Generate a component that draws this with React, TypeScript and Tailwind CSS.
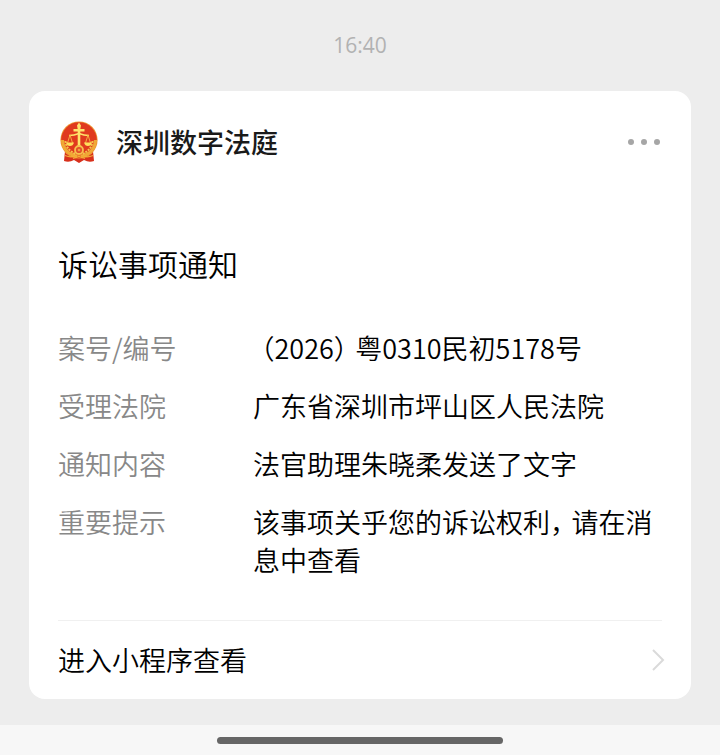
const details = [
  { label: "案号/编号", value: "（2026）粤0310民初5178号" },
  { label: "受理法院", value: "广东省深圳市坪山区人民法院" },
  { label: "通知内容", value: "法官助理朱晓柔发送了文字" },
  { label: "重要提示", value: "该事项关乎您的诉讼权利，请在消息中查看" },
];

// Full-width punctuation uses its half-width form plus a little padding.
function CompactText({ text }: { text: string }) {
  return text.split(/([（），])/).map((part, i) => {
    if (part === "（") return <span key={i} className="pl-2 [font-feature-settings:'halt']">{part}</span>;
    if (part === "）" || part === "，") return <span key={i} className="pr-2 [font-feature-settings:'halt']">{part}</span>;
    return part;
  });
}

function CourtEmblem() {
  return (
    <svg width="40" height="42" viewBox="0 0 40 42" fill="none" aria-hidden="true">
      <path d="M7 30 L6 40 Q11 42 16 39 L21 42 L26 39 Q31 42 36 40 L35 30Z" fill="#d8301c" />
      <circle cx="21" cy="19" r="18.600" fill="#ee9a35" />
      <circle cx="21" cy="19" r="17.800" fill="#e03a1e" />
      <path d="M4.500 19 Q5 32 19 35.500 M37.500 19 Q37 32 23 35.500" stroke="#f0a935" strokeWidth="3.200" />
      <path d="M7.500 20 Q8 29 18 33 M34.500 20 Q34 29 24 33" stroke="#f4c54d" strokeWidth="2" strokeDasharray="2 1" />
      <path d="M21 1.500 L23 4.500 L22.300 8 H26.500 V10.500 H22.300 V27 H19.700 V10.500 H15.500 V8 H19.700 L19 4.500Z" fill="#ffe36a" />
      <path d="M11 14.500 Q16 14.500 21 12.500 Q26 14.500 31 14.500" stroke="#ffe36a" strokeWidth="1.600" />
      <path d="M12 14 L9.500 22 M12 14 L14.500 22 M30 14 L27.500 22 M30 14 L32.500 22" stroke="#f7b744" strokeWidth="0.900" />
      <path d="M8 21.500 H16 Q15 25 12 25 Q9 25 8 21.500Z M26 21.500 H34 Q33 25 30 25 Q27 25 26 21.500Z" fill="#ffdf5c" />
      <circle cx="21" cy="29" r="4" fill="#e2502a" stroke="#f7c04c" strokeWidth="1.800" />
      <circle cx="21" cy="29" r="1.300" fill="#f0a040" />
      <path d="M7 34.500 Q14 37.500 18 34 H24 Q28 37.500 35 34.500" stroke="#f3ae38" strokeWidth="1.200" />
      <path d="M15 37.500 L21 35.500 L27 37.500" stroke="#f3ae38" strokeWidth="1.200" />
    </svg>
  );
}

export default function App() {
  return (
    <div
      lang="zh-CN"
      className="flex min-h-screen flex-col bg-[#ededed] font-['Noto_Sans_CJK_SC',sans-serif] text-[27px] leading-[38px] text-black"
    >
      <main className="flex-1 px-[29px] pb-[26px]">
        <time className="block pt-[30px] text-center font-['Open_Sans',sans-serif] text-[21px] leading-[30px] text-[#b2b2b2]">
          16:40
        </time>
        <article className="mt-[31px] rounded-2xl bg-white px-[29px] pt-[30px]">
          <header className="flex items-center pr-0.5">
            <CourtEmblem />
            <h1 className="ml-[18px] flex-1 font-medium text-[#1a1a1a]">深圳数字法庭</h1>
            <button type="button" aria-label="更多" className="flex h-[38px] items-center gap-[7px]">
              <span className="size-1.5 rounded-full bg-[#a6a6a6]" />
              <span className="size-1.5 rounded-full bg-[#a6a6a6]" />
              <span className="size-1.5 rounded-full bg-[#a6a6a6]" />
            </button>
          </header>
          <h2 className="mt-20 text-[30px] leading-[40px] font-[350]">诉讼事项通知</h2>
          <dl className="mt-[46px] flex flex-col gap-5 font-[350]">
            {details.map(({ label, value }) => (
              <div key={label} className="flex">
                <dt className="w-[195px] shrink-0 text-[#888888]">{label}</dt>
                <dd className="flex-1">
                  <CompactText text={value} />
                </dd>
              </div>
            ))}
          </dl>
          <a href="#mini-program" className="mt-[41px] flex h-[79px] items-center justify-between border-t border-[#f0f0f0] font-[350]">
            进入小程序查看
            <svg className="-mr-1" width="14" height="24" viewBox="0 0 14 24" fill="none" aria-hidden="true">
              <path d="M1 2 L11 12 L1 22" stroke="#dadada" strokeWidth="2" />
            </svg>
          </a>
        </article>
      </main>
      <footer className="flex h-[30px] items-center justify-center bg-[#f7f7f7]">
        <div className="h-[7px] w-[286px] rounded-full bg-[#666666]" />
      </footer>
    </div>
  );
}
